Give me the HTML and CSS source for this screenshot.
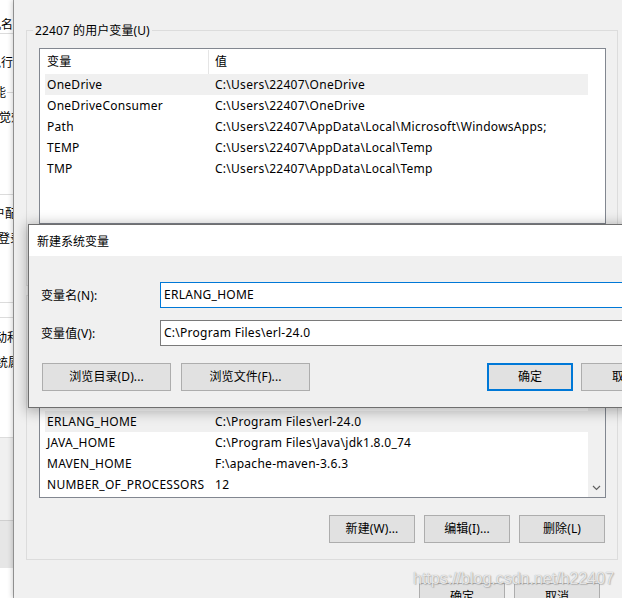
FILE: index.html
```html
<!DOCTYPE html>
<html lang="zh-CN">
<head>
<meta charset="utf-8">
<title>环境变量</title>
<link rel="stylesheet" href="styles.css">
</head>
<body>
<div class="desktop">
  <aside class="behind">
    <div class="bh-text bh-first"><span class="t" style="margin-left:-11px">机名</span></div>
    <div class="bh-text bh-r2"><span class="t" style="margin-left:-11px">执行</span></div>
    <div class="bh-text bh-r3 bh-legend"><span class="t" style="margin-left:-6px">能</span><span class="bh-rule"></span></div>
    <div class="bh-text bh-r4"><span class="t" style="margin-left:-1px">觉效</span></div>
    <div class="bh-line bh-l1"></div>
    <div class="bh-text bh-r6"><span class="t" style="margin-left:-7px">户配</span></div>
    <div class="bh-text bh-r7"><span class="t" style="margin-left:-2px">登录</span></div>
    <div class="bh-line bh-l2"></div>
    <div class="bh-line bh-l3"></div>
    <div class="bh-text bh-r10"><span class="t" style="margin-left:-5px">动和</span></div>
    <div class="bh-text bh-r11"><span class="t" style="margin-left:-4px">统属</span></div>
    <div class="bh-foot"></div>
    <div class="bh-foot2"></div>
  </aside>

  <main class="envwin">
    <fieldset class="group group-user">
      <legend>22407 的用户变量(U)</legend>
      <div class="listview lv-user">
        <div class="lv-body">
          <div class="lv-header"><div class="c1">变量</div><div class="c2">值</div></div>
          <div class="lv-row sel"><div class="c1">OneDrive</div><div class="c2">C:\Users\22407\OneDrive</div></div>
          <div class="lv-row"><div class="c1">OneDriveConsumer</div><div class="c2">C:\Users\22407\OneDrive</div></div>
          <div class="lv-row"><div class="c1">Path</div><div class="c2">C:\Users\22407\AppData\Local\Microsoft\WindowsApps;</div></div>
          <div class="lv-row"><div class="c1">TEMP</div><div class="c2">C:\Users\22407\AppData\Local\Temp</div></div>
          <div class="lv-row"><div class="c1">TMP</div><div class="c2">C:\Users\22407\AppData\Local\Temp</div></div>
        </div>
        <div class="lv-gutter"></div>
      </div>
      <div class="btnrow">
        <button class="btn">新建(N)...</button>
        <button class="btn">编辑(E)...</button>
        <button class="btn">删除(D)</button>
      </div>
    </fieldset>

    <fieldset class="group group-sys">
      <legend class="legend-hidden"></legend>
      <div class="listview lv-sys">
        <div class="lv-body lv-bottom">
          <div class="lv-row sel"><div class="c1">ERLANG_HOME</div><div class="c2">C:\Program Files\erl-24.0</div></div>
          <div class="lv-row"><div class="c1">JAVA_HOME</div><div class="c2">C:\Program Files\Java\jdk1.8.0_74</div></div>
          <div class="lv-row"><div class="c1">MAVEN_HOME</div><div class="c2">F:\apache-maven-3.6.3</div></div>
          <div class="lv-row"><div class="c1">NUMBER_OF_PROCESSORS</div><div class="c2">12</div></div>
        </div>
        <div class="lv-gutter lv-scroll">
          <svg class="sb-arrow" width="9" height="6" viewBox="0 0 9 6"><path d="M1 1 L4.5 4.5 L8 1" fill="none" stroke="#606060" stroke-width="1.2"/></svg>
        </div>
      </div>
      <div class="btnrow">
        <button class="btn">新建(W)...</button>
        <button class="btn">编辑(I)...</button>
        <button class="btn">删除(L)</button>
      </div>
    </fieldset>

    <div class="actions">
      <button class="btn">确定</button>
      <button class="btn">取消</button>
    </div>
  </main>
</div>

<section class="dialog">
  <header class="dlg-title">新建系统变量</header>
  <div class="dlg-body">
    <div class="field">
      <label class="field-label">变量名(N):</label>
      <div class="input focus">ERLANG_HOME</div>
    </div>
    <div class="field">
      <label class="field-label">变量值(V):</label>
      <div class="input">C:\Program Files\erl-24.0</div>
    </div>
    <div class="dlg-buttons">
      <div class="dlg-left">
        <button class="btn wide">浏览目录(D)...</button>
        <button class="btn wide">浏览文件(F)...</button>
      </div>
      <div class="dlg-right">
        <button class="btn default">确定</button>
        <button class="btn">取消</button>
      </div>
    </div>
  </div>
</section>

<div class="watermark">https://blog.csdn.net/h22407</div>
</body>
</html>
```

FILE: styles.css
```css
* { box-sizing: border-box; }
html, body { margin: 0; padding: 0; }
body {
  width: 622px;
  height: 598px;
  overflow: hidden;
  position: relative;
  background: #f0f0f0;
  color: #000;
  font-family: "Noto Sans", "Noto Sans CJK SC", sans-serif;
  font-size: 12px;
  letter-spacing: 0.27px;
}

.desktop { display: flex; height: 598px; }

/* window behind, on the left */
.behind {
  flex: none;
  width: 14px;
  height: 598px;
  background: #ffffff;
  border-right: 1px solid #a5a5a5;
  display: flex;
  flex-direction: column;
  overflow: hidden;
  letter-spacing: 0;
}
.bh-text {
  flex: none;
  height: 18px;
  line-height: 18px;
  white-space: nowrap;
  overflow: hidden;
  display: flex;
  align-items: center;
  font-family: "Noto Sans CJK SC", sans-serif;
}
.bh-text .t { flex: none; }
.bh-first { height: 34px; padding-top: 15px; border-bottom: 1px solid #dcdcdc; align-items: flex-start; }
.bh-r2 { margin-top: 19px; }
.bh-r3 { margin-top: 12px; }
.bh-rule { flex: 1 0 auto; height: 1px; background: #dcdcdc; margin-left: 1px; min-width: 6px; }
.bh-r4 { margin-top: 7px; }
.bh-line { flex: none; height: 1px; background: #dcdcdc; }
.bh-l1 { margin-top: 68px; }
.bh-r6 { margin-top: 9px; }
.bh-r7 { margin-top: 7px; }
.bh-l2 { margin-top: 55px; }
.bh-l3 { margin-top: 14px; }
.bh-r10 { margin-top: 10px; }
.bh-r11 { margin-top: 7px; }
.bh-foot { flex: none; margin-top: 66px; height: 83px; background: #f0f0f0; border-top: 1px solid #dcdcdc; }
.bh-foot2 { flex: none; height: 48px; background: #e6e6e6; border-top: 1px solid #cfcfcf; }

/* main environment variables window */
.envwin {
  flex: none;
  width: 616px;
  padding: 21px 0 0 12px;
  background: #f0f0f0;
  box-shadow: -2px 0 5px rgba(0, 0, 0, 0.18);
}

.group {
  width: 592px;
  min-width: 0;
  margin: 0;
  padding: 8px 11px 16px 12px;
  border: 1px solid #dcdcdc;
}
.group legend {
  height: 19px;
  line-height: 19px;
  padding: 0 2px;
  margin-left: -6px;
  white-space: nowrap;
  letter-spacing: 0.1px;
}
.group legend.legend-hidden { width: 78px; }

.listview {
  display: flex;
  background: #fff;
  border: 1px solid #828790;
  padding-left: 5px;
  overflow: hidden;
}
.lv-user { height: 176px; }
.lv-sys { height: 185px; }

.lv-body {
  flex: 1;
  display: flex;
  flex-direction: column;
  overflow: hidden;
}
.lv-bottom { justify-content: flex-end; padding-bottom: 2px; }
.lv-gutter { flex: none; width: 17px; background: #fff; }
.lv-scroll {
  background: #f0f0f0;
  display: flex;
  flex-direction: column;
  justify-content: flex-end;
  align-items: center;
  padding-bottom: 6px;
}

.lv-header, .lv-row { flex: none; display: flex; white-space: nowrap; }
.lv-header { height: 25px; line-height: 25px; }
.lv-header .c1 { border-right: 1px solid #e5e5e5; margin: 1px 0 0; line-height: 24px; }
.lv-row { height: 21px; line-height: 21px; }
.lv-row.sel { background: #f0f0f0; }
.c1 { flex: none; width: 164px; padding-left: 2px; overflow: hidden; }
.c2 { flex: 1; padding-left: 6px; overflow: hidden; }

.btnrow {
  display: flex;
  justify-content: flex-end;
  gap: 9px;
  margin: 17px 1px 0 0;
}

.btn {
  flex: none;
  width: 86px;
  height: 28px;
  padding: 0;
  margin: 0;
  background: #e1e1e1;
  border: 1px solid #adadad;
  border-radius: 0;
  color: #000;
  font-family: "Noto Sans", "Noto Sans CJK SC", sans-serif;
  font-size: 12px;
  letter-spacing: 0.1px;
  line-height: 26px;
  text-align: center;
}
.btn.wide { width: 129px; }
.btn.default { border: 2px solid #0078d7; line-height: 24px; }

.actions {
  display: flex;
  justify-content: flex-end;
  gap: 9px;
  width: 592px;
  padding-right: 18px;
  margin-top: 23px;
}

/* overlay dialog */
.dialog {
  position: absolute;
  left: 28px;
  top: 224px;
  width: 652px;
  border: 1px solid #6f6f6f;
  background: #f0f0f0;
  box-shadow: 0 2px 12px 2px rgba(0, 0, 0, 0.28);
}
.dlg-title {
  height: 31px;
  line-height: 31px;
  padding-left: 8px;
  background: #fff;
  font-family: "Noto Sans CJK SC", sans-serif;
  letter-spacing: 0;
}
.dlg-body {
  padding: 26px 12px 16px 12px;
  display: flex;
  flex-direction: column;
  gap: 12px;
}
.field { display: flex; align-items: center; height: 26px; }
.field-label { flex: none; width: 119px; letter-spacing: 0.1px; }
.input {
  flex: 1;
  height: 26px;
  line-height: 24px;
  padding: 0 3px;
  background: #fff;
  border: 1px solid #7a7a7a;
  white-space: nowrap;
}
.input.focus { border-color: #0078d7; }

.dlg-buttons {
  display: flex;
  justify-content: space-between;
  margin-top: 5px;
  padding-left: 1px;
}
.dlg-left { display: flex; gap: 10px; }
.dlg-right { display: flex; gap: 8px; }

.watermark {
  position: absolute;
  left: 413px;
  top: 568px;
  font-family: "Liberation Sans", Arial, sans-serif;
  font-size: 16px;
  line-height: 22px;
  letter-spacing: 0;
  color: rgba(245, 245, 245, 0.85);
  text-shadow: 0 0 1px rgba(90, 90, 90, 0.6), 1px 1px 1px rgba(120, 120, 120, 0.35);
  white-space: nowrap;
}
```
